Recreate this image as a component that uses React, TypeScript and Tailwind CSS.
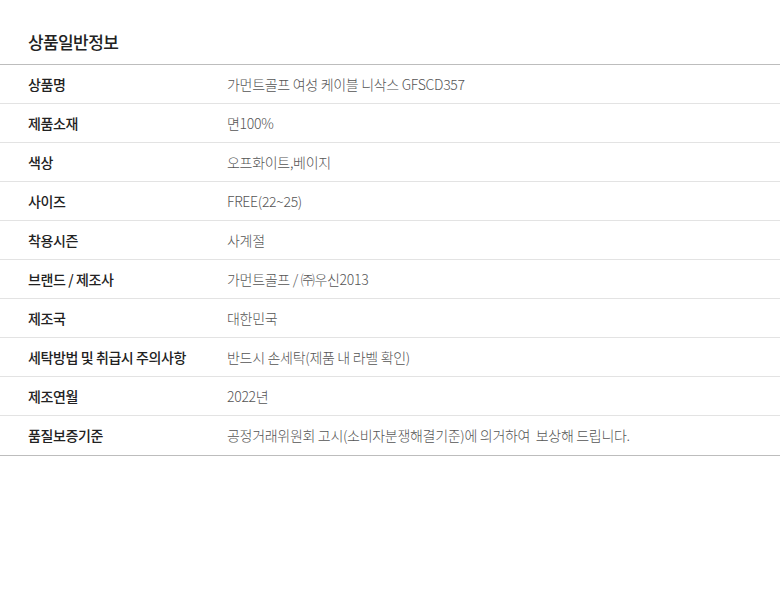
const rows: [string, string][] = [
  ["상품명", "가먼트골프 여성 케이블 니삭스 GFSCD357"],
  ["제품소재", "면100%"],
  ["색상", "오프화이트,베이지"],
  ["사이즈", "FREE(22~25)"],
  ["착용시즌", "사계절"],
  ["브랜드 / 제조사", "가먼트골프 / ㈜우신2013"],
  ["제조국", "대한민국"],
  ["세탁방법 및 취급시 주의사항", "반드시 손세탁(제품 내 라벨 확인)"],
  ["제조연월", "2022년"],
  ["품질보증기준", "공정거래위원회 고시(소비자분쟁해결기준)에 의거하여  보상해 드립니다."],
];

export default function App() {
  return (
    <div className="w-[780px] h-[592px] bg-white font-['Noto_Sans_CJK_KR',sans-serif]">
      <h2 className="pt-[30px] pb-[10px] px-[28px] text-[17px] leading-[24px] font-medium tracking-[-0.6px] text-[#222]">
        상품일반정보
      </h2>
      <div className="border-t border-b border-[#bdbdbd]">
        {rows.map(([label, value], i) => (
          <div
            key={label}
            className={`flex h-[39px] items-center text-[14px] ${i < rows.length - 1 ? "border-b border-[#e3e3e3]" : ""}`}
          >
            <div className="w-[227px] shrink-0 pl-[28px] font-medium tracking-[-0.4px] text-[#222] whitespace-pre">{label}</div>
            <div className="font-light tracking-[-0.3px] text-[#555] whitespace-pre">{value}</div>
          </div>
        ))}
      </div>
    </div>
  );
}
